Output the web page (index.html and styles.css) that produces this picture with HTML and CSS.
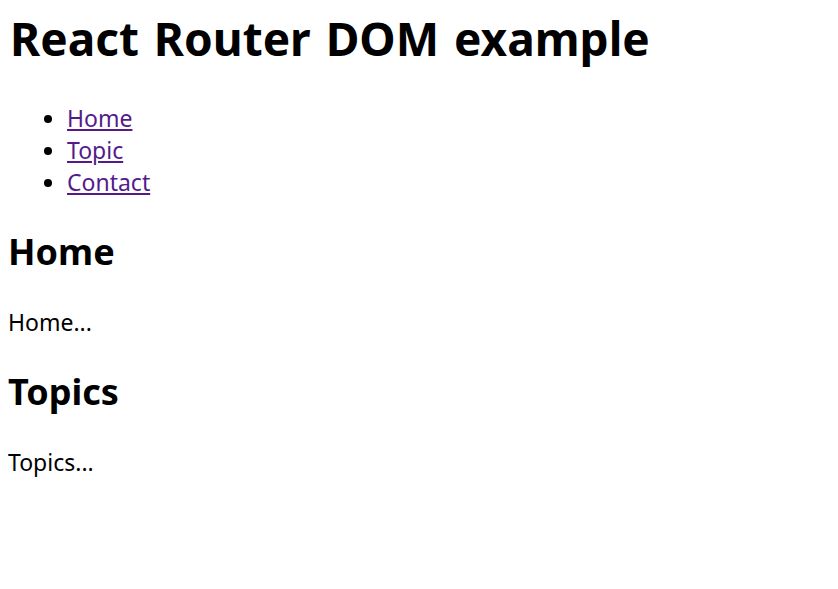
FILE: index.html
```html
<!DOCTYPE html>
<html lang="en">
<head>
    <meta charset="UTF-8">
    <meta name="viewport" content="width=device-width, initial-scale=1.0">
    <title>React Router DOM example</title>
    <link rel="stylesheet" href="styles.css">
</head>
<body>
    <div id="root">
        <h1>React Router DOM example</h1>
        <ul class="nav">
            <li><a href="#/">Home</a></li>
            <li><a href="#/topic">Topic</a></li>
            <li><a href="#/contact">Contact</a></li>
        </ul>
        <h2>Home</h2>
        <p>Home...</p>
        <h2>Topics</h2>
        <p>Topics...</p>
    </div>
</body>
</html>
```

FILE: styles.css
```css
body {
    font-family: 'Noto Sans', sans-serif;
    font-size: 23px;
    line-height: 32px;
    color: #000;
    background-color: #fff;
    margin: 6px 8px 8px;
}
h1 {
    font-size: 46px;
    line-height: 64px;
    word-spacing: 3px;
    margin: 0 0 32px;
    padding-left: 2px;
}
h2 {
    font-size: 36px;
    line-height: 48px;
    margin: 30px 0;
}
p {
    margin: 24px 0;
}
.nav {
    margin: 0 0 24px;
    padding-left: 59px;
}
.nav a {
    color: #551a8b;
}
```
